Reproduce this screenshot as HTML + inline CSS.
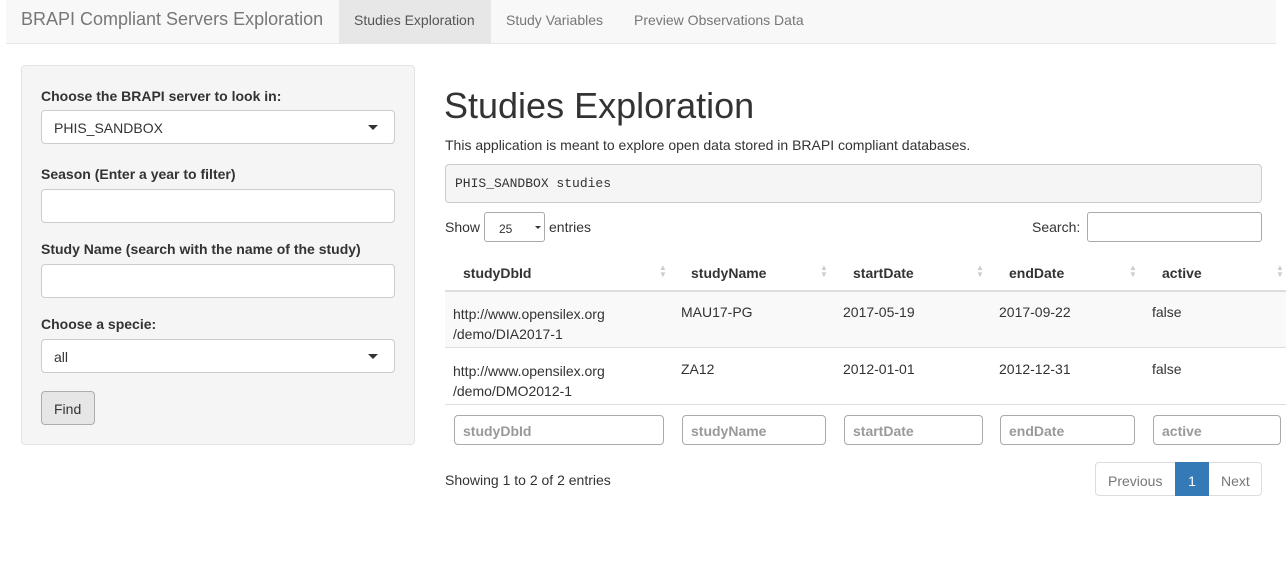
<!DOCTYPE html>
<html><head><style>
*{box-sizing:border-box;margin:0;padding:0}
body{width:1286px;height:576px;background:#fff;font-family:"Liberation Sans",sans-serif;font-size:14px;color:#333;position:relative;overflow:hidden}
.a{position:absolute;white-space:nowrap}
.nav{left:6px;top:0;width:1270px;height:44px;background:#f8f8f8;border-bottom:1px solid #e7e7e7}
.well{left:21px;top:65px;width:394px;height:380px;background:#f5f5f5;border:1px solid #e3e3e3;border-radius:4px}
.lbl{font-weight:bold;left:41px}
.inp{left:41px;width:354px;height:34px;background:#fff;border:1px solid #ccc;border-radius:4px}
.sel{padding:9px 12px}
.caret{position:absolute;right:16px;top:14px;border-left:5px solid transparent;border-right:5px solid transparent;border-top:5px solid #333}
.th{font-weight:bold;top:265px}
.sort{top:264px;color:#ccc;font-size:8px;line-height:7px}
.f{top:415px;height:30px;border:1px solid #aaa;border-radius:4px;color:#999;font-weight:bold;padding:7px 8px;font-size:14px}
</style></head><body>
<div class="a nav"></div>
<div class="a" style="left:339px;top:0;width:152px;height:43px;background:#e7e7e7"></div>
<div class="a" style="left:21px;top:9px;font-size:18px;color:#777">BRAPI Compliant Servers Exploration</div>
<div class="a" style="left:354px;top:12px;color:#555">Studies Exploration</div>
<div class="a" style="left:506px;top:12px;color:#777">Study Variables</div>
<div class="a" style="left:634px;top:12px;color:#777">Preview Observations Data</div>

<div class="a well"></div>
<div class="a lbl" style="top:88px">Choose the BRAPI server to look in:</div>
<div class="a inp sel" style="top:110px">PHIS_SANDBOX<span class="caret"></span></div>
<div class="a lbl" style="top:166px">Season (Enter a year to filter)</div>
<div class="a inp" style="top:189px"></div>
<div class="a lbl" style="top:241px">Study Name (search with the name of the study)</div>
<div class="a inp" style="top:264px"></div>
<div class="a lbl" style="top:316px">Choose a specie:</div>
<div class="a inp sel" style="top:339px">all<span class="caret"></span></div>
<div class="a" style="left:41px;top:391px;width:54px;height:34px;background:#e6e6e6;border:1px solid #adadad;border-radius:4px;padding:9px 12px">Find</div>

<div class="a" style="left:444px;top:85px;font-size:36px;font-weight:500">Studies Exploration</div>
<div class="a" style="left:445px;top:137px">This application is meant to explore open data stored in BRAPI compliant databases.</div>
<div class="a" style="left:445px;top:164px;width:817px;height:39px;background:#f5f5f5;border:1px solid #ccc;border-radius:4px;font-family:'Liberation Mono',monospace;font-size:13px;padding:11px 9px">PHIS_SANDBOX studies</div>

<div class="a" style="left:445px;top:219px">Show</div>
<div class="a" style="left:484px;top:212px;width:61px;height:30px;border:1px solid #aaa;border-radius:3px;font-size:12px;padding:9px 14px">25<span style="position:absolute;right:3px;top:13px;border-left:3px solid transparent;border-right:3px solid transparent;border-top:3px solid #333"></span></div>
<div class="a" style="left:549px;top:219px">entries</div>
<div class="a" style="left:1032px;top:219px">Search:</div>
<div class="a" style="left:1087px;top:212px;width:175px;height:30px;border:1px solid #aaa;border-radius:3px"></div>

<div class="a th" style="left:463px">studyDbId</div>
<div class="a th" style="left:691px">studyName</div>
<div class="a th" style="left:853px">startDate</div>
<div class="a th" style="left:1009px">endDate</div>
<div class="a th" style="left:1162px">active</div>
<div class="a sort" style="left:659px">▲<br>▼</div>
<div class="a sort" style="left:820px">▲<br>▼</div>
<div class="a sort" style="left:976px">▲<br>▼</div>
<div class="a sort" style="left:1129px">▲<br>▼</div>
<div class="a sort" style="left:1276px">▲<br>▼</div>
<div class="a" style="left:445px;top:290px;width:841px;height:2px;background:#ddd"></div>
<div class="a" style="left:445px;top:292px;width:841px;height:56px;background:#f9f9f9;border-bottom:1px solid #ddd"></div>
<div class="a" style="left:445px;top:348px;width:841px;height:57px;border-bottom:1px solid #ddd"></div>
<div class="a" style="left:453px;top:304px;line-height:20px;white-space:normal">http://www.opensilex.org<br>/demo/DIA2017-1</div>
<div class="a" style="left:681px;top:304px">MAU17-PG</div>
<div class="a" style="left:843px;top:304px">2017-05-19</div>
<div class="a" style="left:999px;top:304px">2017-09-22</div>
<div class="a" style="left:1152px;top:304px">false</div>
<div class="a" style="left:453px;top:361px;line-height:20px;white-space:normal">http://www.opensilex.org<br>/demo/DMO2012-1</div>
<div class="a" style="left:681px;top:361px">ZA12</div>
<div class="a" style="left:843px;top:361px">2012-01-01</div>
<div class="a" style="left:999px;top:361px">2012-12-31</div>
<div class="a" style="left:1152px;top:361px">false</div>

<div class="a f" style="left:454px;width:210px">studyDbId</div>
<div class="a f" style="left:682px;width:144px">studyName</div>
<div class="a f" style="left:844px;width:139px">startDate</div>
<div class="a f" style="left:1000px;width:135px">endDate</div>
<div class="a f" style="left:1153px;width:128px">active</div>

<div class="a" style="left:445px;top:472px">Showing 1 to 2 of 2 entries</div>
<div class="a" style="left:1095px;top:462px;width:167px;height:34px;border:1px solid #ddd;border-radius:4px"></div>
<div class="a" style="left:1108px;top:473px;color:#777">Previous</div>
<div class="a" style="left:1175px;top:462px;width:34px;height:34px;background:#337ab7;color:#fff;text-align:center;padding-top:11px">1</div>
<div class="a" style="left:1221px;top:473px;color:#777">Next</div>
</body></html>
